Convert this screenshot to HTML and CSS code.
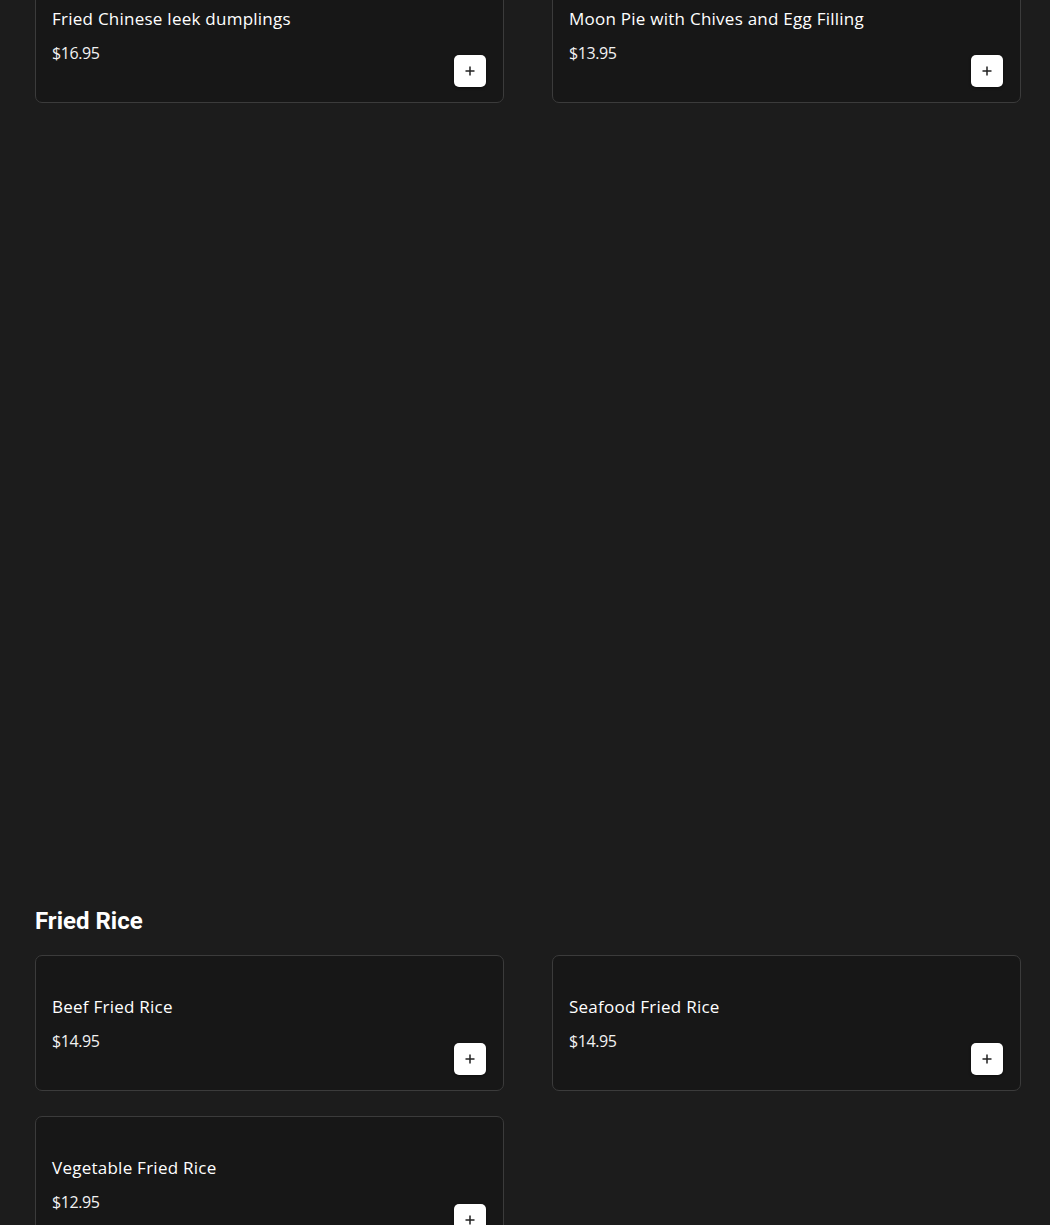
FILE: index.html
```html
<!DOCTYPE html>
<html>
<head>
<meta charset="utf-8">
<link rel="stylesheet" href="styles.css">
</head>
<body>
<main class="menu">
  <section class="section section-first">
    <div class="grid">
      <div class="card">
        <div class="card-body">
          <div class="name">Fried Chinese leek dumplings</div>
          <div class="price">$16.95</div>
        </div>
        <button class="add"><svg viewBox="0 0 12 12" width="12" height="12"><path d="M6 1.5v9M1.5 6h9" stroke="#222" stroke-width="1.5" fill="none"/></svg></button>
      </div>
      <div class="card">
        <div class="card-body">
          <div class="name">Moon Pie with Chives and Egg Filling</div>
          <div class="price">$13.95</div>
        </div>
        <button class="add"><svg viewBox="0 0 12 12" width="12" height="12"><path d="M6 1.5v9M1.5 6h9" stroke="#222" stroke-width="1.5" fill="none"/></svg></button>
      </div>
    </div>
  </section>
  <div class="spacer"></div>
  <section class="section">
    <h2 class="section-title">Fried Rice</h2>
    <div class="grid">
      <div class="card">
        <div class="card-body">
          <div class="name">Beef Fried Rice</div>
          <div class="price">$14.95</div>
        </div>
        <button class="add"><svg viewBox="0 0 12 12" width="12" height="12"><path d="M6 1.5v9M1.5 6h9" stroke="#222" stroke-width="1.5" fill="none"/></svg></button>
      </div>
      <div class="card">
        <div class="card-body">
          <div class="name">Seafood Fried Rice</div>
          <div class="price">$14.95</div>
        </div>
        <button class="add"><svg viewBox="0 0 12 12" width="12" height="12"><path d="M6 1.5v9M1.5 6h9" stroke="#222" stroke-width="1.5" fill="none"/></svg></button>
      </div>
      <div class="card">
        <div class="card-body">
          <div class="name">Vegetable Fried Rice</div>
          <div class="price">$12.95</div>
        </div>
        <button class="add"><svg viewBox="0 0 12 12" width="12" height="12"><path d="M6 1.5v9M1.5 6h9" stroke="#222" stroke-width="1.5" fill="none"/></svg></button>
      </div>
    </div>
  </section>
</main>
</body>
</html>
```

FILE: styles.css
```css
html, body {
  margin: 0;
  padding: 0;
  background: #1c1c1c;
  height: 1225px;
  overflow: hidden;
}
body {
  font-family: "Open Sans", "Noto Sans", sans-serif;
  color: #ffffff;
}
.menu {
  padding: 0 29px 0 35px;
}
.section-first {
  margin-top: -33px;
}
.spacer {
  height: 802px;
}
.section-title {
  font-family: Roboto, "Noto Sans", sans-serif;
  font-weight: 700;
  font-size: 24px;
  line-height: 32px;
  margin: 0 0 18px 0;
  color: #ffffff;
}
.grid {
  display: grid;
  grid-template-columns: 469px 469px;
  column-gap: 48px;
  row-gap: 25px;
}
.card {
  position: relative;
  box-sizing: border-box;
  height: 136px;
  background: #171717;
  border: 1px solid #3b3b3b;
  border-radius: 7px;
  padding: 39px 16px 0 16px;
}
.name {
  font-size: 17px;
  font-weight: 500;
  line-height: 24px;
  letter-spacing: 0.25px;
}
.price {
  margin-top: 10px;
  font-size: 16px;
  font-weight: 400;
  line-height: 24px;
  letter-spacing: -0.4px;
  color: #f2f2f2;
}
.add {
  position: absolute;
  right: 17px;
  bottom: 15px;
  width: 32px;
  height: 32px;
  border: none;
  border-radius: 5px;
  background: #ffffff;
  box-shadow: 0 1px 3px rgba(0,0,0,0.5);
  display: flex;
  align-items: center;
  justify-content: center;
  padding: 0;
}
```
